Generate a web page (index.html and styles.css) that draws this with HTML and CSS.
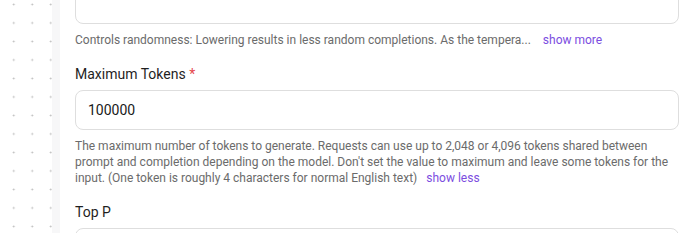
FILE: index.html
```html
<!DOCTYPE html>
<html>
<head>
<meta charset="utf-8">
<link rel="stylesheet" href="styles.css">
</head>
<body>
<div class="layout">
  <div class="canvas"></div>
  <div class="divider"></div>
  <div class="panel">
    <div class="field field-first">
      <div class="input input-tall"></div>
      <p class="help">Controls randomness: Lowering results in less random completions. As the tempera...<a class="toggle toggle-more">show more</a></p>
    </div>
    <div class="field">
      <label class="label">Maximum Tokens <span class="req">*</span></label>
      <div class="input"><span class="value">100000</span></div>
      <p class="help">The maximum number of tokens to generate. Requests can use up to 2,048 or 4,096 tokens shared between prompt and completion depending on the model. Don't set the value to maximum and leave some tokens for the input. (One token is roughly 4 characters for normal English text)<a class="toggle">show less</a></p>
    </div>
    <div class="field">
      <label class="label">Top P</label>
      <div class="input"></div>
    </div>
  </div>
</div>
</body>
</html>
```

FILE: styles.css
```css
html, body {
  margin: 0;
  padding: 0;
  background: #ffffff;
  height: 233px;
  overflow: hidden;
}

body {
  font-family: Roboto, "Liberation Sans", sans-serif;
}

.layout {
  display: flex;
  height: 233px;
}

.canvas {
  width: 52px;
  flex: none;
  background-color: #ffffff;
  background-image: radial-gradient(circle, #b9b9b9 0.8px, transparent 1.1px);
  background-size: 18.5px 18.5px;
  background-position: 4.5px -4.8px;
}

.divider {
  width: 8px;
  flex: none;
  background: #f7f7f8;
}

.panel {
  flex: 1;
  padding: 0 7px 0 15px;
  overflow: hidden;
}

.field {
  margin-bottom: 16px;
}

.field-first {
  margin-top: -36px;
}

.label {
  display: block;
  font-size: 14px;
  line-height: 20px;
  color: #1f1f1f;
  margin-bottom: 6px;
}

.req {
  color: #e5484d;
}

.input {
  height: 38px;
  border: 1px solid #dedede;
  border-radius: 8px;
  background: #ffffff;
  display: flex;
  align-items: center;
  padding: 0 12px;
}

.input-tall {
  height: 58px;
}

.value {
  font-size: 14px;
  color: #1a1a1a;
}

.help {
  margin: 8px 0 0;
  font-size: 12px;
  line-height: 16px;
  color: #6b6b6b;
}

.toggle {
  display: inline-block;
  color: #7c4ddf;
  margin-left: 9px;
  cursor: pointer;
}

.toggle-more {
  margin-left: 12px;
}
```
